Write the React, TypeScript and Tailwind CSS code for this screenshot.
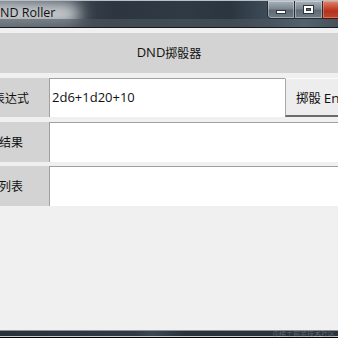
const latin = '"Open Sans", "Noto Sans CJK SC", sans-serif';
const cjk = '"Noto Sans CJK SC", "Open Sans", sans-serif';

function TitleBar() {
  return (
    <div className="relative h-[27px] flex items-start overflow-hidden border-t border-[#b8bfc6] bg-[linear-gradient(to_right,#59626b_0%,#3a434c_22%,#2d3640_34%,#303a44_55%,#2b353f_68%,#3f4e5c_80%,#5b6f80_90%,#3a4550_100%)]">
      {/* aero glow behind caption */}
      <div className="absolute left-[-20px] top-[2px] w-[100px] h-[22px] rounded-full bg-[#d2d6da] blur-[8px]" />
      <div className="absolute left-0 right-0 bottom-0 h-[8px] bg-[#4f5860]/60" />
      <div className="relative w-[276px] shrink-0 h-[25px] flex items-center ml-[-9px]">
        <span className="text-[12.5px] text-[#111]" style={{ fontFamily: latin }}>
          DND Roller
        </span>
      </div>
      <div className="relative flex shrink-0 h-[19px] mt-[-1px]">
        <div className="w-[28px] h-full flex items-center justify-center border border-[#262d34] rounded-bl-[4px] bg-[linear-gradient(to_bottom,#a9b2bb_0%,#7c8791_45%,#5f6a74_55%,#6f7b86_100%)] shadow-[inset_0_0_0_1px_rgba(255,255,255,0.35)]">
          <div className="w-[10px] h-[4px] mt-[4px] bg-white border border-[#2f353b]" />
        </div>
        <div className="w-[28px] h-full flex items-center justify-center border border-l-0 border-[#262d34] bg-[linear-gradient(to_bottom,#a9b2bb_0%,#7c8791_45%,#5f6a74_55%,#6f7b86_100%)] shadow-[inset_0_0_0_1px_rgba(255,255,255,0.35)]">
          <div className="w-[11px] h-[9px] bg-white border border-[#2f353b] flex justify-center pt-[2px]">
            <div className="w-[5px] h-[3px] bg-[#5b6570] border border-[#2f353b]" />
          </div>
        </div>
        <div className="w-[46px] h-full border border-l-0 border-[#4a1208] bg-[linear-gradient(to_bottom,#e0866f_0%,#c9492f_40%,#b2331c_60%,#c0482d_100%)] shadow-[inset_0_0_0_1px_rgba(255,200,180,0.35)]" />
      </div>
    </div>
  );
}

function Row({ label, pr, h, mt, children }: { label: string; pr: string; h: string; mt: string; children: React.ReactNode }) {
  return (
    <div className={`flex ${h} ${mt}`}>
      <div className={`w-[49px] shrink-0 bg-[#d3d3d3] overflow-hidden flex items-center justify-end ${pr}`}>
        <span className="whitespace-nowrap text-[12px] text-[#111]" style={{ fontFamily: cjk }}>
          {label}
        </span>
      </div>
      {children}
    </div>
  );
}

export default function App() {
  return (
    <div className="w-[338px] h-[338px] overflow-hidden flex flex-col bg-[#2c353e]">
      <TitleBar />
      <div className="h-[1px] bg-[#151a1f]" />
      <div className="flex-1 bg-[#f0f0f0] pt-[5px] flex flex-col">
        <div className="h-[40px] bg-[#d3d3d3] flex items-center justify-center text-[#111]">
          <span className="text-[13px]" style={{ fontFamily: latin }}>DND</span>
          <span className="text-[12px]" style={{ fontFamily: cjk }}>掷骰器</span>
        </div>
        <Row label="表达式" pr="pr-[20px]" h="h-[39px]" mt="mt-[5px]">
          <div className="w-[236px] shrink-0 bg-white border-t border-l border-[#a0a0a0] flex items-center pl-[2px]">
            <span className="text-[13px] text-[#111]" style={{ fontFamily: latin }}>2d6+1d20+10</span>
          </div>
          <div className="flex-1 bg-[#ededed] border-l border-t border-l-[#a8a8a8] border-t-[#fafafa] border-b-2 border-b-[#6a6a6a] flex items-center pl-[10px] overflow-hidden">
            <span className="whitespace-nowrap text-[#111]">
              <span className="text-[12.5px]" style={{ fontFamily: cjk }}>掷骰 </span>
              <span className="text-[13.5px]" style={{ fontFamily: latin }}>Enter</span>
            </span>
          </div>
        </Row>
        <Row label="结果" pr="pr-[26px]" h="h-[40px]" mt="mt-[5px]">
          <div className="flex-1 bg-white border-t border-l border-[#a0a0a0]" />
        </Row>
        <Row label="列表" pr="pr-[26px]" h="h-[40px]" mt="mt-[4px]">
          <div className="flex-1 bg-white border-t border-l border-[#a0a0a0]" />
        </Row>
      </div>
      <div className="relative">
        <div className="h-[1px] bg-[#8a939b]" />
        <div className="h-[5px] bg-[linear-gradient(to_right,#27313a_0%,#2f3a44_40%,#3b4852_45%,#27313a_55%,#2a343d_100%)]" />
        <div className="h-[1px] bg-[#c4c8cc]" />
        <div className="h-[1px] bg-black" />
        <span className="absolute right-[3px] top-[-2px] text-[7px] leading-[10px] text-[#8a9096]/50 whitespace-nowrap" style={{ fontFamily: cjk }}>
          @稀土掘金技术社区
        </span>
      </div>
    </div>
  );
}
